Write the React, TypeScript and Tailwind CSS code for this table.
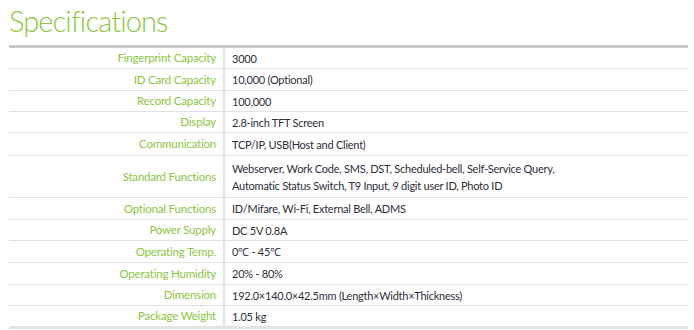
const SPECS = [
  { label: "Fingerprint Capacity", value: ["3000"], h: "h-[21px]" },
  { label: "ID Card Capacity", value: ["10,000 (Optional)"], h: "h-[22px]" },
  { label: "Record Capacity", value: ["100,000"], h: "h-[21px]" },
  { label: "Display", value: ["2.8-inch TFT Screen"], h: "h-[21px]" },
  { label: "Communication", value: ["TCP/IP, USB(Host and Client)"], h: "h-[23px]" },
  {
    label: "Standard Functions",
    value: [
      "Webserver, Work Code, SMS, DST, Scheduled-bell, Self-Service Query,",
      "Automatic Status Switch, T9 Input, 9 digit user ID, Photo ID",
    ],
    h: "h-[42px]",
  },
  { label: "Optional Functions", value: ["ID/Mifare, Wi-Fi, External Bell, ADMS"], h: "h-[22px]" },
  { label: "Power Supply", value: ["DC 5V 0.8A"], h: "h-[21px]" },
  { label: "Operating Temp.", value: ["0℃ - 45℃"], h: "h-[22px]" },
  { label: "Operating Humidity", value: ["20% - 80%"], h: "h-[22px]" },
  { label: "Dimension", value: ["192.0×140.0×42.5mm (Length×Width×Thickness)"], h: "h-[21px]" },
  { label: "Package Weight", value: ["1.05 kg"], h: "h-[20px]" },
];

export default function App() {
  return (
    <div className="h-[330px] w-[694px] bg-white font-['Lato','Open_Sans',sans-serif]">
      <h1 className="pl-[9px] pt-[2px] text-[29px] font-light leading-[38px] tracking-[-0.9px] text-[#8cc63f]">
        Specifications
      </h1>

      <div className="ml-[9px] mt-[5px] w-[679px] border-t-[3px] border-b-[3px] border-t-[#cacaca] border-b-[#e3e3e3]">
        {SPECS.map((row, i) => (
          <div
            key={row.label}
            className={`flex ${row.h} ${i < SPECS.length - 1 ? "border-b border-[#e2e2e2]" : ""}`}
          >
            <div className="flex w-[216px] shrink-0 items-center justify-end border-r-2 border-[#e2e2e2] pr-[7px] text-[11.5px] tracking-[-0.2px] text-[#8cc63f]">
              {row.label}
            </div>
            <div className="flex flex-col justify-center pl-[7px] text-[11px] leading-[17px] tracking-[-0.25px] text-[#2e2e3a]">
              {row.value.map((line) => (
                <span key={line}>{line}</span>
              ))}
            </div>
          </div>
        ))}
      </div>
    </div>
  );
}
